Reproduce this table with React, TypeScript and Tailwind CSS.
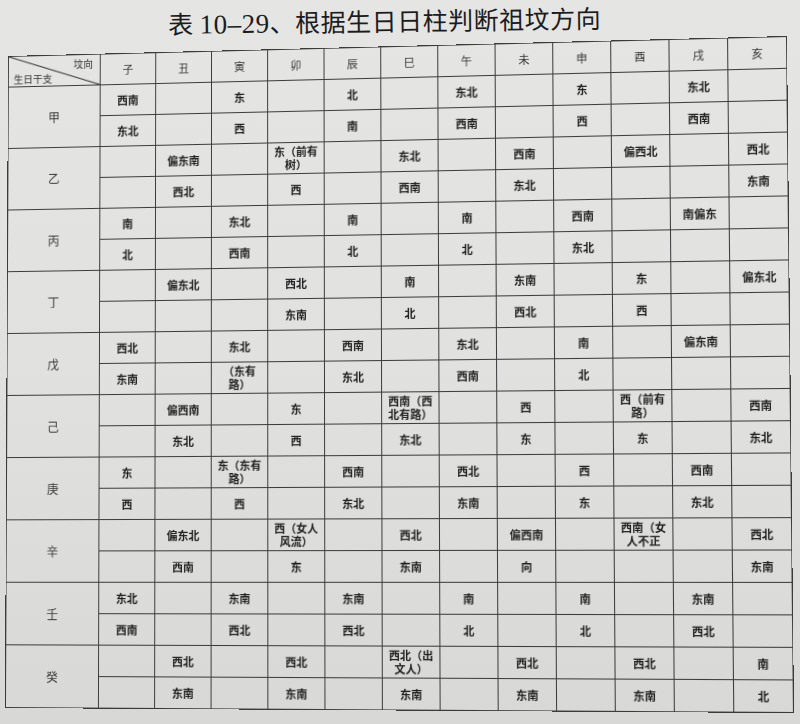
const branches = ["子", "丑", "寅", "卯", "辰", "巳", "午", "未", "申", "酉", "戌", "亥"];

// 每个天干两行，按地支顺序排列
const rows: [string, string[], string[]][] = [
  ["甲", ["西南", "", "东", "", "北", "", "东北", "", "东", "", "东北", ""], ["东北", "", "西", "", "南", "", "西南", "", "西", "", "西南", ""]],
  ["乙", ["", "偏东南", "", "东（前有\n树）", "", "东北", "", "西南", "", "偏西北", "", "西北"], ["", "西北", "", "西", "", "西南", "", "东北", "", "", "", "东南"]],
  ["丙", ["南", "", "东北", "", "南", "", "南", "", "西南", "", "南偏东", ""], ["北", "", "西南", "", "北", "", "北", "", "东北", "", "", ""]],
  ["丁", ["", "偏东北", "", "西北", "", "南", "", "东南", "", "东", "", "偏东北"], ["", "", "", "东南", "", "北", "", "西北", "", "西", "", ""]],
  ["戊", ["西北", "", "东北", "", "西南", "", "东北", "", "南", "", "偏东南", ""], ["东南", "", "（东有\n路）", "", "东北", "", "西南", "", "北", "", "", ""]],
  ["己", ["", "偏西南", "", "东", "", "西南（西\n北有路）", "", "西", "", "西（前有\n路）", "", "西南"], ["", "东北", "", "西", "", "东北", "", "东", "", "东", "", "东北"]],
  ["庚", ["东", "", "东（东有\n路）", "", "西南", "", "西北", "", "西", "", "西南", ""], ["西", "", "西", "", "东北", "", "东南", "", "东", "", "东北", ""]],
  ["辛", ["", "偏东北", "", "西（女人\n风流）", "", "西北", "", "偏西南", "", "西南（女\n人不正", "", "西北"], ["", "西南", "", "东", "", "东南", "", "向", "", "", "", "东南"]],
  ["壬", ["东北", "", "东南", "", "东南", "", "南", "", "南", "", "东南", ""], ["西南", "", "西北", "", "西北", "", "北", "", "北", "", "西北", ""]],
  ["癸", ["", "西北", "", "西北", "", "西北（出\n文人）", "", "西北", "", "西北", "", "南"], ["", "东南", "", "东南", "", "东南", "", "东南", "", "东南", "", "北"]],
];

const cell = "flex items-center justify-center border-r-[1.5px] border-b-[1.5px] border-[#3b3b3b]";

function Cell({ text }: { text: string }) {
  return (
    <div className={`${cell} px-1 text-center whitespace-pre-line text-[11px] leading-[13px] font-semibold text-[#202020]`}>
      {text}
    </div>
  );
}

export default function App() {
  return (
    <div className="w-[800px] h-[724px] overflow-hidden bg-gradient-to-b from-[#e5e5e3] via-[#e1e1df] to-[#d8d8d6] font-['Noto_Sans_CJK_SC',sans-serif]">
      <div className="h-[56px] pt-[4px] pl-[168px] flex items-start">
        <h1 className="rotate-[-0.8deg] text-[25px] leading-[32px] font-normal text-[#1c1c1c] tracking-[0.5px]">
          表 <span className="font-['Liberation_Serif','Noto_Sans_CJK_SC',serif] text-[27px]">10–29</span>、根据生日日柱判断祖坟方向
        </h1>
      </div>

      <div className="w-[780px] origin-top-left [transform:matrix3d(0.961496,-0.024695,0,-0.0000472962,-0.0047031,0.987653,0,-0.0000189662,0,0,1,0,8,0,0,1)]">
        <div className="grid grid-cols-[95px_repeat(12,1fr)] grid-rows-[31px_repeat(20,31px)] border-l-[1.5px] border-t-[1.5px] border-[#3b3b3b]">
          <div className="relative flex flex-col justify-between border-r-[1.5px] border-b-[1.5px] border-[#3b3b3b] px-[5px] pt-[3px] pb-[1px] text-[10px] leading-[12px] text-[#333]">
            <svg className="absolute inset-0 h-full w-full" viewBox="0 0 95 31" preserveAspectRatio="none">
              <line x1="0" y1="0" x2="95" y2="31" stroke="#3b3b3b" strokeWidth="1.2" />
            </svg>
            <span className="self-end pr-[2px]">坟向</span>
            <span className="self-start">生日干支</span>
          </div>
          {branches.map((b) => (
            <div key={b} className={`${cell} text-[11px] text-[#333]`}>{b}</div>
          ))}

          {rows.map(([stem, a, b]) => (
            <div key={stem} className="contents">
              <div className={`${cell} row-span-2 text-[12px] text-[#3a3a3a]`}>{stem}</div>
              {a.map((t, i) => <Cell key={"a" + i} text={t} />)}
              {b.map((t, i) => <Cell key={"b" + i} text={t} />)}
            </div>
          ))}
        </div>
      </div>
    </div>
  );
}
